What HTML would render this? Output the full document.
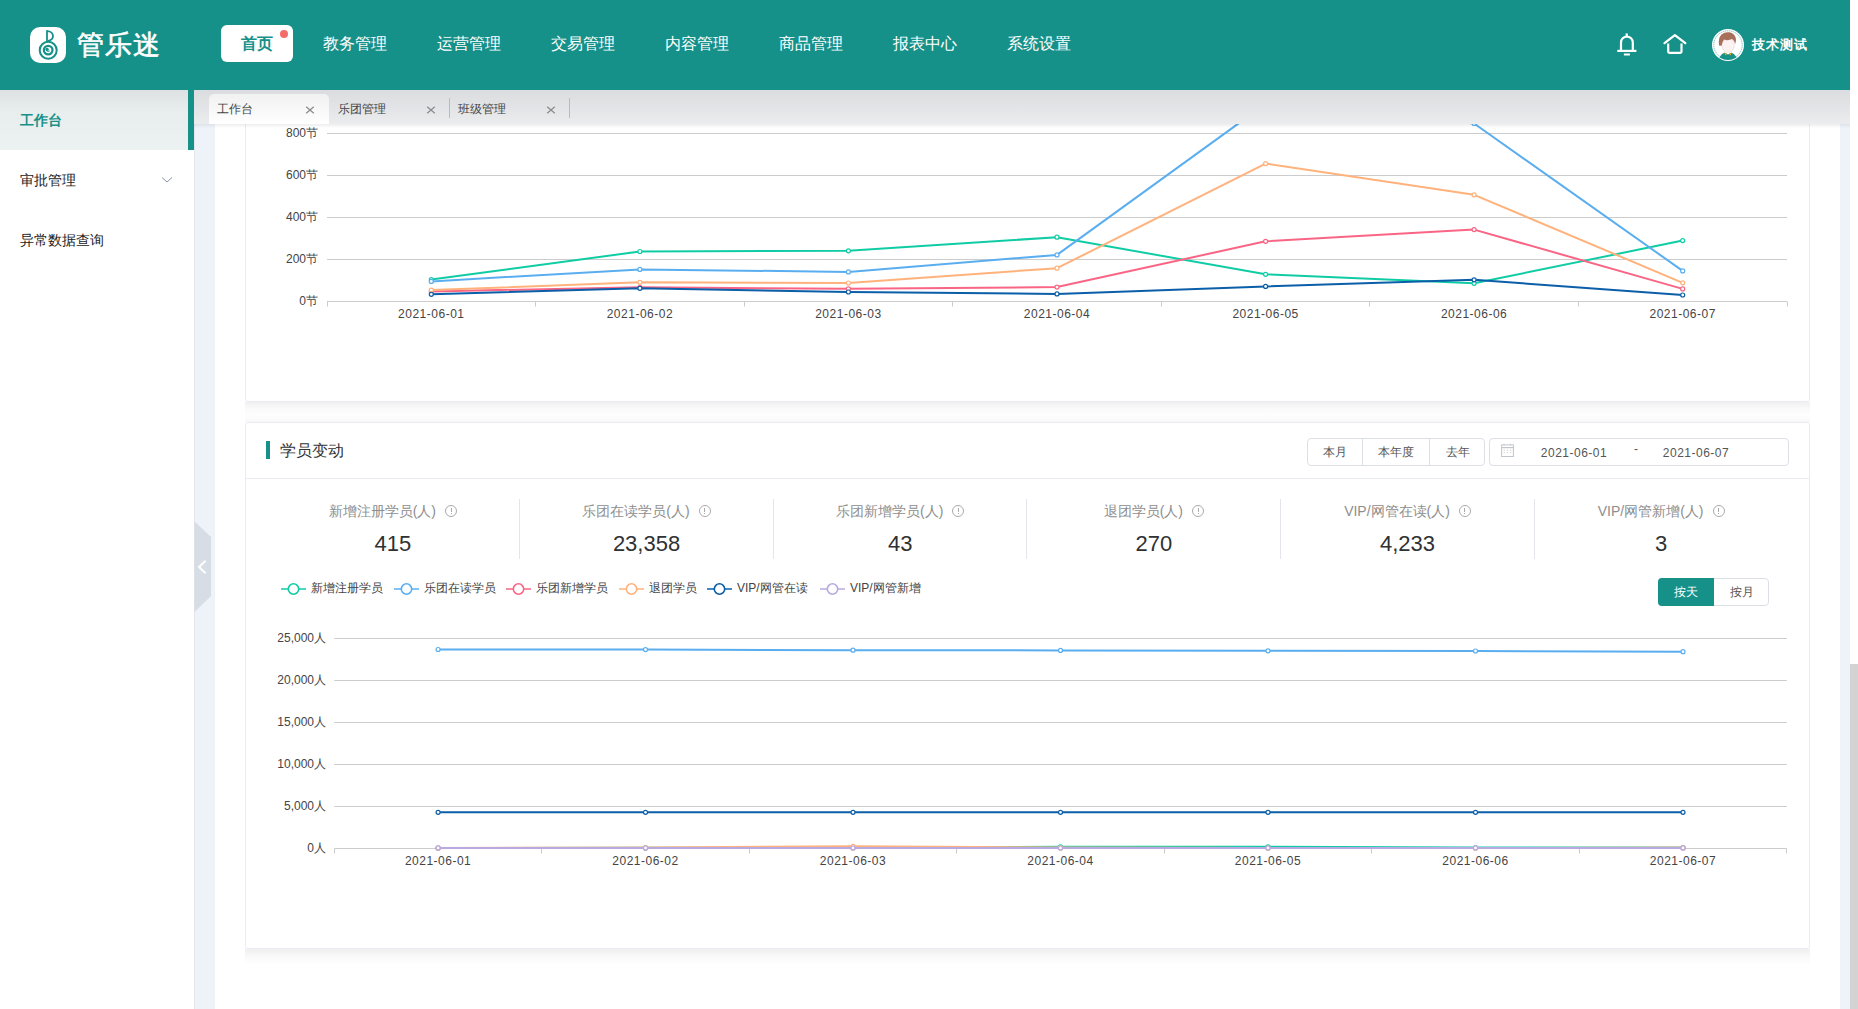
<!DOCTYPE html>
<html><head><meta charset="utf-8">
<style>
*{box-sizing:border-box;margin:0;padding:0}
html,body{width:1858px;height:1009px;overflow:hidden;background:#fff;font-family:"Liberation Sans",sans-serif;color:#333}
.a{position:absolute}
#hdr{left:0;top:0;width:1850px;height:90px;background:#16918a;z-index:10}
#sb{left:1850px;top:0;width:8px;height:1009px;background:#fff;z-index:11}
#thumb{left:1850px;top:664px;width:8px;height:345px;background:#d3d3d3;z-index:12}
.nav{top:25px;height:37px;line-height:37px;font-size:16px;color:#fff;white-space:nowrap}
#side{left:0;top:90px;width:194px;height:919px;background:#fff;z-index:5}
.si{left:20px;font-size:14px;color:#222;white-space:nowrap;line-height:20px}
#cbg{left:194px;top:124px;width:1656px;height:885px;background:#eef3fa}
#panel{left:215px;top:124px;width:1625px;height:885px;background:#fff}
#tabs{left:194px;top:90px;width:1656px;height:34px;background:linear-gradient(#dbdcdf,#ebecee);z-index:9}
.tab{top:4px;height:30px;font-size:12px;color:#444;line-height:30px;white-space:nowrap}
.card{left:245px;width:1565px;background:#fff;border:1px solid #ebebf5;border-radius:3px}
.shd{left:245px;width:1565px}
.lbl{font-size:12px;color:#555;white-space:nowrap;line-height:14px}
</style></head><body>
<div id="hdr" class="a">
  <div class="a" style="left:30px;top:27px;width:36px;height:36px;background:#fff;border-radius:10px">
    <svg width="36" height="36" viewBox="0 0 36 36" style="position:absolute;left:0;top:0">
      <circle cx="18.2" cy="23.2" r="8.5" fill="none" stroke="#16918a" stroke-width="2"/>
      <circle cx="18.2" cy="23.1" r="4.3" fill="none" stroke="#16918a" stroke-width="2.3"/>
      <circle cx="17.2" cy="22.3" r="1.5" fill="#16918a"/>
      <path d="M16 21.5 Q16.2 24.6 19.6 24.2" fill="none" stroke="#16918a" stroke-width="1.2"/>
      <path d="M17 3.3 V14.6" stroke="#16918a" stroke-width="1.8"/>
      <path d="M17 4.1 C21 4.1 23 6.6 23 9.3 C23 11.6 21.4 13.2 17.8 14.2" fill="none" stroke="#16918a" stroke-width="1.8"/>
    </svg>
  </div>
  <div class="a" style="left:77px;top:26px;font-size:27px;line-height:38px;color:#fff;letter-spacing:0.8px;white-space:nowrap;-webkit-text-stroke:0.6px #fff">管乐迷</div>
  <div class="a" style="left:221px;top:25px;width:72px;height:37px;background:#fff;border-radius:6px"></div>
  <div class="a nav" style="left:241px;color:#16918a;font-weight:bold">首页</div>
  <div class="a" style="left:280px;top:30px;width:8px;height:8px;border-radius:50%;background:#f56c6c"></div>
  <div class="a nav" style="left:323px">教务管理</div>
  <div class="a nav" style="left:437px">运营管理</div>
  <div class="a nav" style="left:551px">交易管理</div>
  <div class="a nav" style="left:665px">内容管理</div>
  <div class="a nav" style="left:779px">商品管理</div>
  <div class="a nav" style="left:893px">报表中心</div>
  <div class="a nav" style="left:1007px">系统设置</div>
  <!-- bell -->
  <svg class="a" style="left:1612px;top:28px" width="30" height="32" viewBox="0 0 30 32">
    <path d="M14.7 5.4 V8" stroke="#fff" stroke-width="2.2"/>
    <path d="M9 23 V14.5 A5.9 5.9 0 0 1 20.8 14.5 V23" fill="none" stroke="#fff" stroke-width="2.2"/>
    <path d="M5.3 22.9 H24.4" stroke="#fff" stroke-width="2.2"/>
    <path d="M11.9 26.5 H17.9" stroke="#fff" stroke-width="2"/>
  </svg>
  <!-- home -->
  <svg class="a" style="left:1660px;top:28px" width="30" height="30" viewBox="0 0 30 30">
    <path d="M4.5 15.2 L14.9 7.1 L25.3 15.2" fill="none" stroke="#fff" stroke-width="2.2" stroke-linecap="round" stroke-linejoin="round"/>
    <path d="M8.2 15.6 V23.3 Q8.2 24.9 9.8 24.9 H19.9 Q21.5 24.9 21.5 23.3 V15.6" fill="none" stroke="#fff" stroke-width="2.2"/>
  </svg>
  <!-- avatar -->
  <div class="a" style="left:1712px;top:29px;width:32px;height:32px;border-radius:50%;background:#fff;overflow:hidden">
    <svg width="32" height="32" viewBox="0 0 32 32" style="position:absolute;left:0;top:0">
      <circle cx="16" cy="16" r="14.2" fill="none" stroke="#16918a" stroke-width="0.5" stroke-dasharray="1.5 0.6"/>
      <path d="M7.5 28.5 Q9.5 24.5 13 23.8 L16 25.5 L19 23.8 Q22.5 24.5 24.5 28.5 Q20 31 16 31 Q12 31 7.5 28.5Z" fill="#16918a"/>
      <path d="M12.3 23.3 L13.2 26.6 L15.2 25 Z M19.7 23.3 L18.8 26.6 L16.8 25 Z" fill="#e0a31a"/>
      <ellipse cx="16.1" cy="16.4" rx="6.3" ry="6.9" fill="#fdf1f1" stroke="#bbb" stroke-width="0.3"/>
      <path d="M7 16.5 Q6 9 9.5 5.5 Q13 2.5 17.5 3.3 Q22.5 4.2 23.9 9.5 Q24.3 12.5 23.2 15 Q22.5 11.5 20 10 Q16 12 12 10.5 Q10 13 9.6 16.8 Z" fill="#a8705a"/>
    </svg>
  </div>
  <div class="a" style="left:1752px;top:35px;font-size:13px;line-height:20px;color:#fff;font-weight:bold;white-space:nowrap;letter-spacing:1px">技术测试</div>
</div>
<div id="sb" class="a"></div>
<div id="thumb" class="a"></div>

<div id="side" class="a">
  <div class="a" style="left:0;top:0;width:188px;height:60px;background:linear-gradient(#dde1e1,#e8eded 35%,#ecf2f1)"></div>
  <div class="a" style="left:188px;top:0;width:6px;height:60px;background:#16918a"></div>
  <div class="a si" style="top:20px;color:#16918a;font-weight:bold">工作台</div>
  <div class="a si" style="top:80px">审批管理</div>
  <svg class="a" style="left:161px;top:86px" width="12" height="8" viewBox="0 0 12 8"><path d="M1 1.5 L6 6 L11 1.5" fill="none" stroke="#8a94a6" stroke-width="1"/></svg>
  <div class="a si" style="top:140px">异常数据查询</div>
</div>

<div id="cbg" class="a"></div>
<div id="panel" class="a"></div>
<div class="a" style="left:194px;top:124px;width:1px;height:885px;background:#e2e5ea;z-index:1"></div>
<!-- collapse handle -->
<svg class="a" style="left:194px;top:520px;z-index:6" width="18" height="94" viewBox="0 0 18 94">
  <path d="M0.5 1.5 L17 17 L17 76 L0.5 92 Z" fill="#d6dde5"/>
  <path d="M11.6 40.8 L5 47 L11.6 53.2" fill="none" stroke="#fff" stroke-width="2"/>
</svg>

<!-- tabs -->
<div id="tabs" class="a">
  <div class="a" style="left:15px;top:4px;width:120px;height:30px;border-radius:5px 5px 0 0;background:linear-gradient(#f1f1f1,#fff)"></div>
  <div class="a tab" style="left:23px">工作台</div>
  <svg class="a" style="left:110px;top:13.5px" width="12" height="12" viewBox="0 0 12 12"><path d="M2.2 2.8 L9.8 9.2 M9.8 2.8 L2.2 9.2" stroke="#8c8c8c" stroke-width="1.3"/></svg>
  <div class="a tab" style="left:144px">乐团管理</div>
  <svg class="a" style="left:231px;top:13.5px" width="12" height="12" viewBox="0 0 12 12"><path d="M2.2 2.8 L9.8 9.2 M9.8 2.8 L2.2 9.2" stroke="#8c8c8c" stroke-width="1.3"/></svg>
  <div class="a" style="left:255px;top:8px;width:1px;height:20px;background:#bbb"></div>
  <div class="a tab" style="left:264px">班级管理</div>
  <svg class="a" style="left:351px;top:13.5px" width="12" height="12" viewBox="0 0 12 12"><path d="M2.2 2.8 L9.8 9.2 M9.8 2.8 L2.2 9.2" stroke="#8c8c8c" stroke-width="1.3"/></svg>
  <div class="a" style="left:375px;top:8px;width:1px;height:20px;background:#bbb"></div>
</div>

<div class="a" style="left:194px;top:124px;width:1656px;height:4px;z-index:8;background:linear-gradient(rgba(0,0,0,0.07),rgba(0,0,0,0))"></div>
<!-- card 1 -->
<div class="a card" style="top:40px;height:362px"></div>
<div class="a shd" style="top:402px;height:20px;background:linear-gradient(#f0f0f0,#f9f9f9 30%,#fdfdfd 60%,#fcfcfc 85%,#f6f6f6)"></div>
<!-- card 2 -->
<div class="a card" style="top:422px;height:527px"></div>
<div class="a shd" style="top:949px;height:16px;background:linear-gradient(#efefef,#f8f8f8 40%,#ffffff)"></div>

<div id="c2" class="a" style="left:0;top:0;width:1858px;height:1009px">
  <div class="a" style="left:266px;top:441px;width:4px;height:18px;background:#16918a"></div>
  <div class="a" style="left:280px;top:440px;font-size:16px;line-height:22px;color:#333;white-space:nowrap">学员变动</div>
  <div class="a" style="left:246px;top:478px;width:1563px;height:1px;background:#ebebf5"></div>
  <!-- buttons -->
  <div class="a" style="left:1307px;top:438px;width:178px;height:28px;border:1px solid #dcdfe6;border-radius:4px"></div>
  <div class="a" style="left:1362px;top:438px;width:1px;height:28px;background:#dcdfe6"></div>
  <div class="a" style="left:1429px;top:438px;width:1px;height:28px;background:#dcdfe6"></div>
  <div class="a lbl" style="left:1307px;top:445px;width:55px;text-align:center;color:#555">本月</div>
  <div class="a lbl" style="left:1363px;top:445px;width:66px;text-align:center;color:#555">本年度</div>
  <div class="a lbl" style="left:1430px;top:445px;width:55px;text-align:center;color:#555">去年</div>
  <div class="a" style="left:1489px;top:438px;width:300px;height:28px;border:1px solid #dcdfe6;border-radius:4px"></div>
  <svg class="a" style="left:1500px;top:443px" width="15" height="15" viewBox="0 0 15 15"><rect x="1.6" y="1.9" width="11.8" height="11.6" fill="none" stroke="#c0c4cc" stroke-width="1"/><path d="M1.6 4.6 H13.4" stroke="#c0c4cc" stroke-width="1.2"/><path d="M4 0.8 V2.6 M10.5 0.8 V2.6" stroke="#c0c4cc" stroke-width="0.8"/><path d="M3.6 7.2h1.4M6.8 7.2h1.4M10 7.2h1.4M3.6 9.6h1.4M6.8 9.6h1.4M10 9.6h1.4" stroke="#c8cbd2" stroke-width="0.8"/></svg>
  <div class="a lbl" style="left:1524px;top:446px;width:100px;text-align:center;color:#555;letter-spacing:0.5px">2021-06-01</div>
  <div class="a lbl" style="left:1630px;top:442px;width:12px;text-align:center;color:#555">-</div>
  <div class="a lbl" style="left:1646px;top:446px;width:100px;text-align:center;color:#555;letter-spacing:0.5px">2021-06-07</div>
  <!-- stats -->
  <div class="a" style="left:519px;top:499px;width:1px;height:60px;background:#e4e4ec"></div>
  <div class="a" style="left:773px;top:499px;width:1px;height:60px;background:#e4e4ec"></div>
  <div class="a" style="left:1026px;top:499px;width:1px;height:60px;background:#e4e4ec"></div>
  <div class="a" style="left:1280px;top:499px;width:1px;height:60px;background:#e4e4ec"></div>
  <div class="a" style="left:1534px;top:499px;width:1px;height:60px;background:#e4e4ec"></div>
  <div class="a" style="left:266.0px;top:502px;width:253.7px;text-align:center;font-size:14px;line-height:18px;color:#8e8e8e;white-space:nowrap">新增注册学员(人)<span style="display:inline-block;width:12px;height:12px;border:1px solid #aaa;border-radius:50%;margin-left:9px;vertical-align:-1px;position:relative"><span style="position:absolute;left:4.5px;top:2px;width:1px;height:4px;background:#aaa"></span><span style="position:absolute;left:4.5px;top:7px;width:1px;height:1px;background:#aaa"></span></span></div>
  <div class="a" style="left:266.0px;top:530px;width:253.7px;text-align:center;font-size:22px;line-height:28px;color:#303133;white-space:nowrap">415</div>
  <div class="a" style="left:519.7px;top:502px;width:253.7px;text-align:center;font-size:14px;line-height:18px;color:#8e8e8e;white-space:nowrap">乐团在读学员(人)<span style="display:inline-block;width:12px;height:12px;border:1px solid #aaa;border-radius:50%;margin-left:9px;vertical-align:-1px;position:relative"><span style="position:absolute;left:4.5px;top:2px;width:1px;height:4px;background:#aaa"></span><span style="position:absolute;left:4.5px;top:7px;width:1px;height:1px;background:#aaa"></span></span></div>
  <div class="a" style="left:519.7px;top:530px;width:253.7px;text-align:center;font-size:22px;line-height:28px;color:#303133;white-space:nowrap">23,358</div>
  <div class="a" style="left:773.3px;top:502px;width:253.7px;text-align:center;font-size:14px;line-height:18px;color:#8e8e8e;white-space:nowrap">乐团新增学员(人)<span style="display:inline-block;width:12px;height:12px;border:1px solid #aaa;border-radius:50%;margin-left:9px;vertical-align:-1px;position:relative"><span style="position:absolute;left:4.5px;top:2px;width:1px;height:4px;background:#aaa"></span><span style="position:absolute;left:4.5px;top:7px;width:1px;height:1px;background:#aaa"></span></span></div>
  <div class="a" style="left:773.3px;top:530px;width:253.7px;text-align:center;font-size:22px;line-height:28px;color:#303133;white-space:nowrap">43</div>
  <div class="a" style="left:1027.0px;top:502px;width:253.7px;text-align:center;font-size:14px;line-height:18px;color:#8e8e8e;white-space:nowrap">退团学员(人)<span style="display:inline-block;width:12px;height:12px;border:1px solid #aaa;border-radius:50%;margin-left:9px;vertical-align:-1px;position:relative"><span style="position:absolute;left:4.5px;top:2px;width:1px;height:4px;background:#aaa"></span><span style="position:absolute;left:4.5px;top:7px;width:1px;height:1px;background:#aaa"></span></span></div>
  <div class="a" style="left:1027.0px;top:530px;width:253.7px;text-align:center;font-size:22px;line-height:28px;color:#303133;white-space:nowrap">270</div>
  <div class="a" style="left:1280.7px;top:502px;width:253.7px;text-align:center;font-size:14px;line-height:18px;color:#8e8e8e;white-space:nowrap">VIP/网管在读(人)<span style="display:inline-block;width:12px;height:12px;border:1px solid #aaa;border-radius:50%;margin-left:9px;vertical-align:-1px;position:relative"><span style="position:absolute;left:4.5px;top:2px;width:1px;height:4px;background:#aaa"></span><span style="position:absolute;left:4.5px;top:7px;width:1px;height:1px;background:#aaa"></span></span></div>
  <div class="a" style="left:1280.7px;top:530px;width:253.7px;text-align:center;font-size:22px;line-height:28px;color:#303133;white-space:nowrap">4,233</div>
  <div class="a" style="left:1534.3px;top:502px;width:253.7px;text-align:center;font-size:14px;line-height:18px;color:#8e8e8e;white-space:nowrap">VIP/网管新增(人)<span style="display:inline-block;width:12px;height:12px;border:1px solid #aaa;border-radius:50%;margin-left:9px;vertical-align:-1px;position:relative"><span style="position:absolute;left:4.5px;top:2px;width:1px;height:4px;background:#aaa"></span><span style="position:absolute;left:4.5px;top:7px;width:1px;height:1px;background:#aaa"></span></span></div>
  <div class="a" style="left:1534.3px;top:530px;width:253.7px;text-align:center;font-size:22px;line-height:28px;color:#303133;white-space:nowrap">3</div>
  <!-- legend -->
  <svg class="a" style="left:281px;top:582px" width="26" height="14" viewBox="0 0 26 14"><path d="M0 7 H25" stroke="#10cca5" stroke-width="1.5"/><circle cx="12.5" cy="7" r="5.2" fill="#fff" stroke="#10cca5" stroke-width="1.6"/></svg>
  <div class="a lbl" style="left:311px;top:581px;color:#444">新增注册学员</div>
  <svg class="a" style="left:394px;top:582px" width="26" height="14" viewBox="0 0 26 14"><path d="M0 7 H25" stroke="#5aaef0" stroke-width="1.5"/><circle cx="12.5" cy="7" r="5.2" fill="#fff" stroke="#5aaef0" stroke-width="1.6"/></svg>
  <div class="a lbl" style="left:424px;top:581px;color:#444">乐团在读学员</div>
  <svg class="a" style="left:506px;top:582px" width="26" height="14" viewBox="0 0 26 14"><path d="M0 7 H25" stroke="#fa6585" stroke-width="1.5"/><circle cx="12.5" cy="7" r="5.2" fill="#fff" stroke="#fa6585" stroke-width="1.6"/></svg>
  <div class="a lbl" style="left:536px;top:581px;color:#444">乐团新增学员</div>
  <svg class="a" style="left:619px;top:582px" width="26" height="14" viewBox="0 0 26 14"><path d="M0 7 H25" stroke="#ffb27c" stroke-width="1.5"/><circle cx="12.5" cy="7" r="5.2" fill="#fff" stroke="#ffb27c" stroke-width="1.6"/></svg>
  <div class="a lbl" style="left:649px;top:581px;color:#444">退团学员</div>
  <svg class="a" style="left:707px;top:582px" width="26" height="14" viewBox="0 0 26 14"><path d="M0 7 H25" stroke="#0b5ea8" stroke-width="1.5"/><circle cx="12.5" cy="7" r="5.2" fill="#fff" stroke="#0b5ea8" stroke-width="1.6"/></svg>
  <div class="a lbl" style="left:737px;top:581px;color:#444">VIP/网管在读</div>
  <svg class="a" style="left:820px;top:582px" width="26" height="14" viewBox="0 0 26 14"><path d="M0 7 H25" stroke="#b9a9e3" stroke-width="1.5"/><circle cx="12.5" cy="7" r="5.2" fill="#fff" stroke="#b9a9e3" stroke-width="1.6"/></svg>
  <div class="a lbl" style="left:850px;top:581px;color:#444">VIP/网管新增</div>
  <!-- toggle -->
  <div class="a" style="left:1658px;top:578px;width:111px;height:28px;border:1px solid #dcdfe6;border-radius:4px"></div>
  <div class="a" style="left:1658px;top:578px;width:56px;height:28px;background:#16918a;border-radius:4px 0 0 4px"></div>
  <div class="a lbl" style="left:1658px;top:585px;width:56px;text-align:center;color:#fff">按天</div>
  <div class="a lbl" style="left:1714px;top:585px;width:55px;text-align:center;color:#555">按月</div>
</div>

<svg class="a" style="left:0;top:0;z-index:3" width="1858" height="1009" viewBox="0 0 1858 1009">
<path d="M327 133.5 H1787" stroke="#cccccc" stroke-width="1"/>
<path d="M327 175.5 H1787" stroke="#cccccc" stroke-width="1"/>
<path d="M327 217.5 H1787" stroke="#cccccc" stroke-width="1"/>
<path d="M327 259.5 H1787" stroke="#cccccc" stroke-width="1"/>
<path d="M327 301.5 H1787" stroke="#cccccc" stroke-width="1"/>
<path d="M327.5 301.5 V306.5" stroke="#cccccc" stroke-width="1"/>
<path d="M535.5 301.5 V306.5" stroke="#cccccc" stroke-width="1"/>
<path d="M744.5 301.5 V306.5" stroke="#cccccc" stroke-width="1"/>
<path d="M952.5 301.5 V306.5" stroke="#cccccc" stroke-width="1"/>
<path d="M1161.5 301.5 V306.5" stroke="#cccccc" stroke-width="1"/>
<path d="M1369.5 301.5 V306.5" stroke="#cccccc" stroke-width="1"/>
<path d="M1578.5 301.5 V306.5" stroke="#cccccc" stroke-width="1"/>
<path d="M1787.5 301.5 V306.5" stroke="#cccccc" stroke-width="1"/>
<path d="M431.3 279.6 L639.9 251.5 L848.4 250.8 L1057.0 237.2 L1265.6 274.3 L1474.1 283.3 L1682.7 240.6" fill="none" stroke="#10cca5" stroke-width="2" stroke-linejoin="round"/>
<circle cx="431.3" cy="279.6" r="2" fill="#fff" stroke="#10cca5" stroke-width="1.2"/>
<circle cx="639.9" cy="251.5" r="2" fill="#fff" stroke="#10cca5" stroke-width="1.2"/>
<circle cx="848.4" cy="250.8" r="2" fill="#fff" stroke="#10cca5" stroke-width="1.2"/>
<circle cx="1057.0" cy="237.2" r="2" fill="#fff" stroke="#10cca5" stroke-width="1.2"/>
<circle cx="1265.6" cy="274.3" r="2" fill="#fff" stroke="#10cca5" stroke-width="1.2"/>
<circle cx="1474.1" cy="283.3" r="2" fill="#fff" stroke="#10cca5" stroke-width="1.2"/>
<circle cx="1682.7" cy="240.6" r="2" fill="#fff" stroke="#10cca5" stroke-width="1.2"/>
<path d="M431.3 281.4 L639.9 269.4 L848.4 271.9 L1057.0 254.9 L1265.6 103.9 L1474.1 123.5 L1682.7 270.9" fill="none" stroke="#5aaef0" stroke-width="2" stroke-linejoin="round"/>
<circle cx="431.3" cy="281.4" r="2" fill="#fff" stroke="#5aaef0" stroke-width="1.2"/>
<circle cx="639.9" cy="269.4" r="2" fill="#fff" stroke="#5aaef0" stroke-width="1.2"/>
<circle cx="848.4" cy="271.9" r="2" fill="#fff" stroke="#5aaef0" stroke-width="1.2"/>
<circle cx="1057.0" cy="254.9" r="2" fill="#fff" stroke="#5aaef0" stroke-width="1.2"/>
<circle cx="1265.6" cy="103.9" r="2" fill="#fff" stroke="#5aaef0" stroke-width="1.2"/>
<circle cx="1474.1" cy="123.5" r="2" fill="#fff" stroke="#5aaef0" stroke-width="1.2"/>
<circle cx="1682.7" cy="270.9" r="2" fill="#fff" stroke="#5aaef0" stroke-width="1.2"/>
<path d="M431.3 291.4 L639.9 287.3 L848.4 288.8 L1057.0 287.1 L1265.6 241.3 L1474.1 229.6 L1682.7 288.9" fill="none" stroke="#fa6585" stroke-width="2" stroke-linejoin="round"/>
<circle cx="431.3" cy="291.4" r="2" fill="#fff" stroke="#fa6585" stroke-width="1.2"/>
<circle cx="639.9" cy="287.3" r="2" fill="#fff" stroke="#fa6585" stroke-width="1.2"/>
<circle cx="848.4" cy="288.8" r="2" fill="#fff" stroke="#fa6585" stroke-width="1.2"/>
<circle cx="1057.0" cy="287.1" r="2" fill="#fff" stroke="#fa6585" stroke-width="1.2"/>
<circle cx="1265.6" cy="241.3" r="2" fill="#fff" stroke="#fa6585" stroke-width="1.2"/>
<circle cx="1474.1" cy="229.6" r="2" fill="#fff" stroke="#fa6585" stroke-width="1.2"/>
<circle cx="1682.7" cy="288.9" r="2" fill="#fff" stroke="#fa6585" stroke-width="1.2"/>
<path d="M431.3 290.1 L639.9 282.3 L848.4 283.0 L1057.0 268.2 L1265.6 163.6 L1474.1 194.8 L1682.7 282.8" fill="none" stroke="#ffb27c" stroke-width="2" stroke-linejoin="round"/>
<circle cx="431.3" cy="290.1" r="2" fill="#fff" stroke="#ffb27c" stroke-width="1.2"/>
<circle cx="639.9" cy="282.3" r="2" fill="#fff" stroke="#ffb27c" stroke-width="1.2"/>
<circle cx="848.4" cy="283.0" r="2" fill="#fff" stroke="#ffb27c" stroke-width="1.2"/>
<circle cx="1057.0" cy="268.2" r="2" fill="#fff" stroke="#ffb27c" stroke-width="1.2"/>
<circle cx="1265.6" cy="163.6" r="2" fill="#fff" stroke="#ffb27c" stroke-width="1.2"/>
<circle cx="1474.1" cy="194.8" r="2" fill="#fff" stroke="#ffb27c" stroke-width="1.2"/>
<circle cx="1682.7" cy="282.8" r="2" fill="#fff" stroke="#ffb27c" stroke-width="1.2"/>
<path d="M431.3 294.3 L639.9 288.3 L848.4 292.0 L1057.0 293.9 L1265.6 286.4 L1474.1 279.8 L1682.7 295.0" fill="none" stroke="#0b5ea8" stroke-width="2" stroke-linejoin="round"/>
<circle cx="431.3" cy="294.3" r="2" fill="#fff" stroke="#0b5ea8" stroke-width="1.2"/>
<circle cx="639.9" cy="288.3" r="2" fill="#fff" stroke="#0b5ea8" stroke-width="1.2"/>
<circle cx="848.4" cy="292.0" r="2" fill="#fff" stroke="#0b5ea8" stroke-width="1.2"/>
<circle cx="1057.0" cy="293.9" r="2" fill="#fff" stroke="#0b5ea8" stroke-width="1.2"/>
<circle cx="1265.6" cy="286.4" r="2" fill="#fff" stroke="#0b5ea8" stroke-width="1.2"/>
<circle cx="1474.1" cy="279.8" r="2" fill="#fff" stroke="#0b5ea8" stroke-width="1.2"/>
<circle cx="1682.7" cy="295.0" r="2" fill="#fff" stroke="#0b5ea8" stroke-width="1.2"/>
<path d="M334.3 638.5 H1786.8" stroke="#cccccc" stroke-width="1"/>
<path d="M334.3 680.5 H1786.8" stroke="#cccccc" stroke-width="1"/>
<path d="M334.3 722.5 H1786.8" stroke="#cccccc" stroke-width="1"/>
<path d="M334.3 764.5 H1786.8" stroke="#cccccc" stroke-width="1"/>
<path d="M334.3 806.5 H1786.8" stroke="#cccccc" stroke-width="1"/>
<path d="M334.3 848.5 H1786.8" stroke="#cccccc" stroke-width="1"/>
<path d="M334.5 848.5 V853.5" stroke="#cccccc" stroke-width="1"/>
<path d="M541.5 848.5 V853.5" stroke="#cccccc" stroke-width="1"/>
<path d="M749.5 848.5 V853.5" stroke="#cccccc" stroke-width="1"/>
<path d="M956.5 848.5 V853.5" stroke="#cccccc" stroke-width="1"/>
<path d="M1164.5 848.5 V853.5" stroke="#cccccc" stroke-width="1"/>
<path d="M1371.5 848.5 V853.5" stroke="#cccccc" stroke-width="1"/>
<path d="M1579.5 848.5 V853.5" stroke="#cccccc" stroke-width="1"/>
<path d="M1786.5 848.5 V853.5" stroke="#cccccc" stroke-width="1"/>
<path d="M438.1 848.0 L645.5 847.8 L853.0 847.5 L1060.5 846.8 L1268.0 846.8 L1475.5 847.5 L1683.0 847.6" fill="none" stroke="#10cca5" stroke-width="2" stroke-linejoin="round"/>
<circle cx="438.1" cy="848.0" r="2" fill="#fff" stroke="#10cca5" stroke-width="1.2"/>
<circle cx="645.5" cy="847.8" r="2" fill="#fff" stroke="#10cca5" stroke-width="1.2"/>
<circle cx="853.0" cy="847.5" r="2" fill="#fff" stroke="#10cca5" stroke-width="1.2"/>
<circle cx="1060.5" cy="846.8" r="2" fill="#fff" stroke="#10cca5" stroke-width="1.2"/>
<circle cx="1268.0" cy="846.8" r="2" fill="#fff" stroke="#10cca5" stroke-width="1.2"/>
<circle cx="1475.5" cy="847.5" r="2" fill="#fff" stroke="#10cca5" stroke-width="1.2"/>
<circle cx="1683.0" cy="847.6" r="2" fill="#fff" stroke="#10cca5" stroke-width="1.2"/>
<path d="M438.1 649.5 L645.5 649.6 L853.0 650.2 L1060.5 650.4 L1268.0 650.8 L1475.5 651.0 L1683.0 651.7" fill="none" stroke="#5aaef0" stroke-width="2" stroke-linejoin="round"/>
<circle cx="438.1" cy="649.5" r="2" fill="#fff" stroke="#5aaef0" stroke-width="1.2"/>
<circle cx="645.5" cy="649.6" r="2" fill="#fff" stroke="#5aaef0" stroke-width="1.2"/>
<circle cx="853.0" cy="650.2" r="2" fill="#fff" stroke="#5aaef0" stroke-width="1.2"/>
<circle cx="1060.5" cy="650.4" r="2" fill="#fff" stroke="#5aaef0" stroke-width="1.2"/>
<circle cx="1268.0" cy="650.8" r="2" fill="#fff" stroke="#5aaef0" stroke-width="1.2"/>
<circle cx="1475.5" cy="651.0" r="2" fill="#fff" stroke="#5aaef0" stroke-width="1.2"/>
<circle cx="1683.0" cy="651.7" r="2" fill="#fff" stroke="#5aaef0" stroke-width="1.2"/>
<path d="M438.1 848.0 L645.5 848.0 L853.0 848.0 L1060.5 848.0 L1268.0 848.0 L1475.5 848.0 L1683.0 848.0" fill="none" stroke="#fa6585" stroke-width="2" stroke-linejoin="round"/>
<circle cx="438.1" cy="848.0" r="2" fill="#fff" stroke="#fa6585" stroke-width="1.2"/>
<circle cx="645.5" cy="848.0" r="2" fill="#fff" stroke="#fa6585" stroke-width="1.2"/>
<circle cx="853.0" cy="848.0" r="2" fill="#fff" stroke="#fa6585" stroke-width="1.2"/>
<circle cx="1060.5" cy="848.0" r="2" fill="#fff" stroke="#fa6585" stroke-width="1.2"/>
<circle cx="1268.0" cy="848.0" r="2" fill="#fff" stroke="#fa6585" stroke-width="1.2"/>
<circle cx="1475.5" cy="848.0" r="2" fill="#fff" stroke="#fa6585" stroke-width="1.2"/>
<circle cx="1683.0" cy="848.0" r="2" fill="#fff" stroke="#fa6585" stroke-width="1.2"/>
<path d="M438.1 848.0 L645.5 847.6 L853.0 846.3 L1060.5 847.6 L1268.0 848.0 L1475.5 848.0 L1683.0 847.6" fill="none" stroke="#ffb27c" stroke-width="2" stroke-linejoin="round"/>
<circle cx="438.1" cy="848.0" r="2" fill="#fff" stroke="#ffb27c" stroke-width="1.2"/>
<circle cx="645.5" cy="847.6" r="2" fill="#fff" stroke="#ffb27c" stroke-width="1.2"/>
<circle cx="853.0" cy="846.3" r="2" fill="#fff" stroke="#ffb27c" stroke-width="1.2"/>
<circle cx="1060.5" cy="847.6" r="2" fill="#fff" stroke="#ffb27c" stroke-width="1.2"/>
<circle cx="1268.0" cy="848.0" r="2" fill="#fff" stroke="#ffb27c" stroke-width="1.2"/>
<circle cx="1475.5" cy="848.0" r="2" fill="#fff" stroke="#ffb27c" stroke-width="1.2"/>
<circle cx="1683.0" cy="847.6" r="2" fill="#fff" stroke="#ffb27c" stroke-width="1.2"/>
<path d="M438.1 812.3 L645.5 812.3 L853.0 812.3 L1060.5 812.3 L1268.0 812.3 L1475.5 812.3 L1683.0 812.3" fill="none" stroke="#0b5ea8" stroke-width="2" stroke-linejoin="round"/>
<circle cx="438.1" cy="812.3" r="2" fill="#fff" stroke="#0b5ea8" stroke-width="1.2"/>
<circle cx="645.5" cy="812.3" r="2" fill="#fff" stroke="#0b5ea8" stroke-width="1.2"/>
<circle cx="853.0" cy="812.3" r="2" fill="#fff" stroke="#0b5ea8" stroke-width="1.2"/>
<circle cx="1060.5" cy="812.3" r="2" fill="#fff" stroke="#0b5ea8" stroke-width="1.2"/>
<circle cx="1268.0" cy="812.3" r="2" fill="#fff" stroke="#0b5ea8" stroke-width="1.2"/>
<circle cx="1475.5" cy="812.3" r="2" fill="#fff" stroke="#0b5ea8" stroke-width="1.2"/>
<circle cx="1683.0" cy="812.3" r="2" fill="#fff" stroke="#0b5ea8" stroke-width="1.2"/>
<path d="M438.1 847.9 L645.5 847.9 L853.0 847.9 L1060.5 847.9 L1268.0 847.9 L1475.5 847.9 L1683.0 847.9" fill="none" stroke="#b9a9e3" stroke-width="2" stroke-linejoin="round"/>
<circle cx="438.1" cy="847.9" r="2" fill="#fff" stroke="#b9a9e3" stroke-width="1.2"/>
<circle cx="645.5" cy="847.9" r="2" fill="#fff" stroke="#b9a9e3" stroke-width="1.2"/>
<circle cx="853.0" cy="847.9" r="2" fill="#fff" stroke="#b9a9e3" stroke-width="1.2"/>
<circle cx="1060.5" cy="847.9" r="2" fill="#fff" stroke="#b9a9e3" stroke-width="1.2"/>
<circle cx="1268.0" cy="847.9" r="2" fill="#fff" stroke="#b9a9e3" stroke-width="1.2"/>
<circle cx="1475.5" cy="847.9" r="2" fill="#fff" stroke="#b9a9e3" stroke-width="1.2"/>
<circle cx="1683.0" cy="847.9" r="2" fill="#fff" stroke="#b9a9e3" stroke-width="1.2"/>
</svg>
<div class="a lbl" style="left:218px;top:125.5px;width:100px;text-align:right;color:#444;z-index:4">800节</div>
<div class="a lbl" style="left:218px;top:167.5px;width:100px;text-align:right;color:#444;z-index:4">600节</div>
<div class="a lbl" style="left:218px;top:209.5px;width:100px;text-align:right;color:#444;z-index:4">400节</div>
<div class="a lbl" style="left:218px;top:251.5px;width:100px;text-align:right;color:#444;z-index:4">200节</div>
<div class="a lbl" style="left:218px;top:293.5px;width:100px;text-align:right;color:#444;z-index:4">0节</div>
<div class="a lbl" style="left:226px;top:630.5px;width:100px;text-align:right;color:#444;z-index:4">25,000人</div>
<div class="a lbl" style="left:226px;top:672.5px;width:100px;text-align:right;color:#444;z-index:4">20,000人</div>
<div class="a lbl" style="left:226px;top:714.5px;width:100px;text-align:right;color:#444;z-index:4">15,000人</div>
<div class="a lbl" style="left:226px;top:756.5px;width:100px;text-align:right;color:#444;z-index:4">10,000人</div>
<div class="a lbl" style="left:226px;top:798.5px;width:100px;text-align:right;color:#444;z-index:4">5,000人</div>
<div class="a lbl" style="left:226px;top:840.5px;width:100px;text-align:right;color:#444;z-index:4">0人</div>
<div class="a lbl" style="left:381.3px;top:307px;width:100px;text-align:center;color:#444;letter-spacing:0.5px;z-index:4">2021-06-01</div>
<div class="a lbl" style="left:589.9px;top:307px;width:100px;text-align:center;color:#444;letter-spacing:0.5px;z-index:4">2021-06-02</div>
<div class="a lbl" style="left:798.4px;top:307px;width:100px;text-align:center;color:#444;letter-spacing:0.5px;z-index:4">2021-06-03</div>
<div class="a lbl" style="left:1007.0px;top:307px;width:100px;text-align:center;color:#444;letter-spacing:0.5px;z-index:4">2021-06-04</div>
<div class="a lbl" style="left:1215.6px;top:307px;width:100px;text-align:center;color:#444;letter-spacing:0.5px;z-index:4">2021-06-05</div>
<div class="a lbl" style="left:1424.1px;top:307px;width:100px;text-align:center;color:#444;letter-spacing:0.5px;z-index:4">2021-06-06</div>
<div class="a lbl" style="left:1632.7px;top:307px;width:100px;text-align:center;color:#444;letter-spacing:0.5px;z-index:4">2021-06-07</div>
<div class="a lbl" style="left:388.1px;top:854px;width:100px;text-align:center;color:#444;letter-spacing:0.5px;z-index:4">2021-06-01</div>
<div class="a lbl" style="left:595.5px;top:854px;width:100px;text-align:center;color:#444;letter-spacing:0.5px;z-index:4">2021-06-02</div>
<div class="a lbl" style="left:803.0px;top:854px;width:100px;text-align:center;color:#444;letter-spacing:0.5px;z-index:4">2021-06-03</div>
<div class="a lbl" style="left:1010.5px;top:854px;width:100px;text-align:center;color:#444;letter-spacing:0.5px;z-index:4">2021-06-04</div>
<div class="a lbl" style="left:1218.0px;top:854px;width:100px;text-align:center;color:#444;letter-spacing:0.5px;z-index:4">2021-06-05</div>
<div class="a lbl" style="left:1425.5px;top:854px;width:100px;text-align:center;color:#444;letter-spacing:0.5px;z-index:4">2021-06-06</div>
<div class="a lbl" style="left:1633.0px;top:854px;width:100px;text-align:center;color:#444;letter-spacing:0.5px;z-index:4">2021-06-07</div>
</body></html>
